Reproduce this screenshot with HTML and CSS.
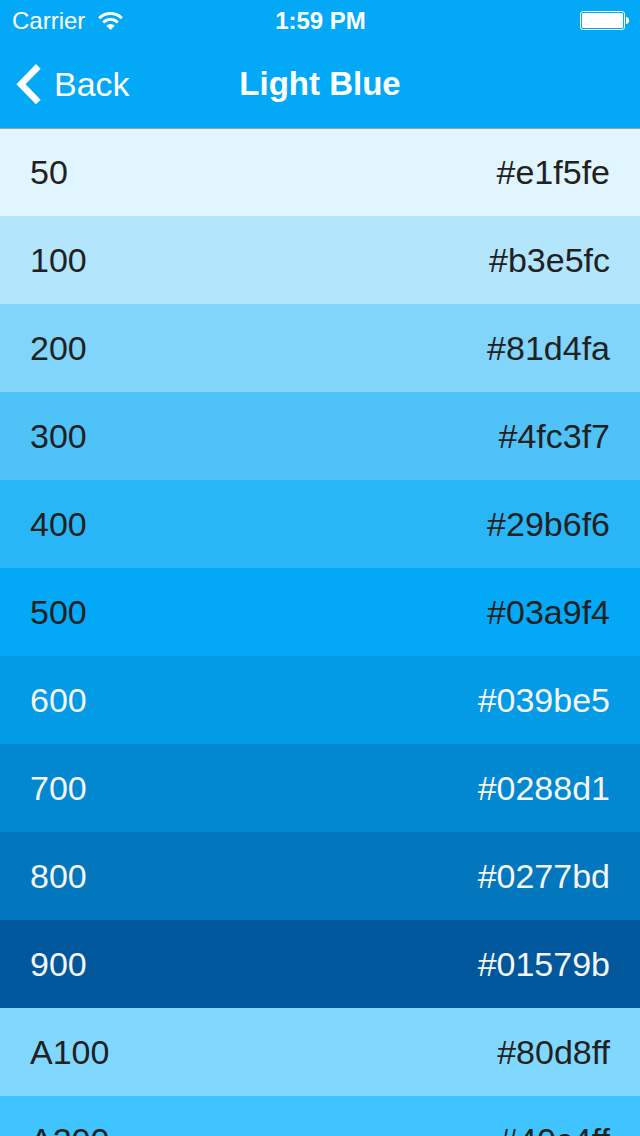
FILE: index.html
```html
<!DOCTYPE html>
<html lang="en">
<head>
<meta charset="utf-8">
<meta name="viewport" content="width=device-width, initial-scale=1">
<title>Light Blue</title>
<link rel="stylesheet" href="styles.css">
</head>
<body>
<div class="screen">
  <header class="header">
    <div class="status">
      <div class="carrier">
        <span>Carrier</span>
        <svg class="wifi" width="25" height="18" viewBox="0 0 25 18" aria-hidden="true">
          <path d="M1.2 6.2A16 16 0 0 1 23.8 6.2" fill="none" stroke="#fff" stroke-width="2.9"/>
          <path d="M5.2 10.5A10.3 10.3 0 0 1 19.8 10.5" fill="none" stroke="#fff" stroke-width="2.8"/>
          <path d="M12.5 18L8.3 13.7A6 6 0 0 1 16.7 13.7Z" fill="#fff"/>
        </svg>
      </div>
      <time class="clock">1:59 PM</time>
      <svg class="battery" width="49" height="19" viewBox="0 0 49 19" aria-hidden="true">
        <rect x=".5" y=".5" width="44" height="18" rx="2.5" fill="none" stroke="#fff"/>
        <rect x="2" y="2" width="41" height="15" rx="1.5" fill="#fff"/>
        <path d="M46 6C48 6 49 7.5 49 9.5S48 13 46 13Z" fill="#fff"/>
      </svg>
    </div>
    <nav class="navbar">
      <a class="back" href="#">
        <svg width="25" height="42" viewBox="0 0 25 42" aria-hidden="true">
          <path d="M22.3 3.4L5 21.2L22.3 39" fill="none" stroke="#fff" stroke-width="6.6"/>
        </svg>
        <span>Back</span>
      </a>
      <h1 class="title">Light Blue</h1>
    </nav>
  </header>
  <ul class="swatches">
    <li class="swatch tone-50"><span>50</span><span>#e1f5fe</span></li>
    <li class="swatch tone-100"><span>100</span><span>#b3e5fc</span></li>
    <li class="swatch tone-200"><span>200</span><span>#81d4fa</span></li>
    <li class="swatch tone-300"><span>300</span><span>#4fc3f7</span></li>
    <li class="swatch tone-400"><span>400</span><span>#29b6f6</span></li>
    <li class="swatch tone-500"><span>500</span><span>#03a9f4</span></li>
    <li class="swatch tone-600 light-text"><span>600</span><span>#039be5</span></li>
    <li class="swatch tone-700 light-text"><span>700</span><span>#0288d1</span></li>
    <li class="swatch tone-800 light-text"><span>800</span><span>#0277bd</span></li>
    <li class="swatch tone-900 light-text"><span>900</span><span>#01579b</span></li>
    <li class="swatch tone-a100"><span>A100</span><span>#80d8ff</span></li>
    <li class="swatch tone-a200"><span>A200</span><span>#40c4ff</span></li>
  </ul>
</div>
</body>
</html>
```
FILE: styles.css
```css
* { box-sizing: border-box; }

body {
  margin: 0;
  font-family: "Liberation Sans", Arial, sans-serif;
}

.screen {
  display: flex;
  flex-direction: column;
  height: 100vh;
  overflow: hidden;
}

.header {
  flex: none;
  z-index: 1;
  background: #03a9f6;
  box-shadow: 0 1px #8fa3b0;
  color: #fff;
}

.status,
.navbar {
  display: grid;
  grid-template-columns: 1fr auto 1fr;
  align-items: center;
}

.status {
  height: 40px;
  padding: 1px 11px 0 12px;
  font-size: 24px;
}

.carrier {
  display: flex;
  align-items: center;
  gap: 13px;
}

.clock {
  font-size: 24px;
  font-weight: bold;
}

.battery { justify-self: end; }

.navbar {
  height: 88px;
  padding: 0 16px;
}

.back {
  display: flex;
  align-items: center;
  justify-self: start;
  gap: 13px;
  color: #fff;
  font-size: 34px;
  text-decoration: none;
}

.title {
  margin: 0;
  font-size: 33px;
  font-weight: bold;
}

.swatches {
  flex: 1;
  min-height: 0;
  margin: 0;
  padding: 0;
  list-style: none;
  overflow: hidden;
}

.swatch {
  display: flex;
  align-items: center;
  justify-content: space-between;
  height: 88px;
  padding: 0 30px;
  color: #212121;
  font-size: 34px;
}

.light-text { color: #f5f5f5; }

.tone-50 { background: #e1f5fe; }
.tone-100 { background: #b3e5fc; }
.tone-200 { background: #81d4fa; }
.tone-300 { background: #4fc3f7; }
.tone-400 { background: #29b6f6; }
.tone-500 { background: #03a9f6; }
.tone-600 { background: #039be5; }
.tone-700 { background: #0288d1; }
.tone-800 { background: #0277bd; }
.tone-900 { background: #01579b; }
.tone-a100 { background: #80d8ff; }
.tone-a200 { background: #40c4ff; }
```
